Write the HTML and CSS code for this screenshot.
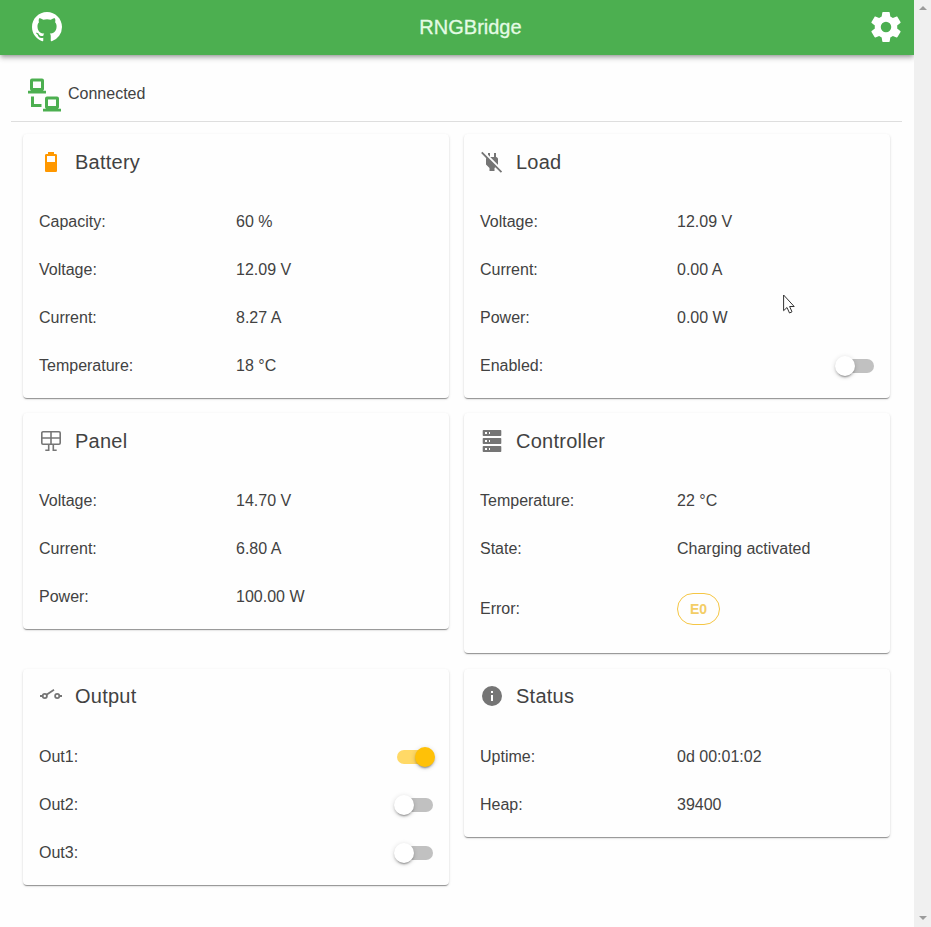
FILE: index.html
```html
<!DOCTYPE html>
<html lang="en">
<head>
<meta charset="utf-8">
<title>RNGBridge</title>
<link rel="stylesheet" href="styles.css">
</head>
<body>
<div class="app">
  <div class="page">
    <header class="bar">
      <svg class="bar-icon" viewBox="0 0 16 16"><path d="M8 0C3.58 0 0 3.58 0 8c0 3.54 2.29 6.53 5.47 7.59.4.07.55-.17.55-.38 0-.19-.01-.82-.01-1.49-2.01.37-2.53-.49-2.69-.94-.09-.23-.48-.94-.82-1.13-.28-.15-.68-.52-.01-.53.63-.01 1.08.58 1.23.82.72 1.21 1.87.87 2.33.66.07-.52.28-.87.51-1.07-1.78-.2-3.64-.89-3.64-3.95 0-.87.31-1.59.82-2.15-.08-.2-.36-1.02.08-2.12 0 0 .67-.21 2.2.82.64-.18 1.32-.27 2-.27s1.36.09 2 .27c1.53-1.04 2.2-.82 2.2-.82.44 1.1.16 1.92.08 2.12.51.56.82 1.27.82 2.15 0 3.07-1.87 3.75-3.65 3.95.29.25.54.73.54 1.48 0 1.07-.01 1.93-.01 2.2 0 .21.15.46.55.38A8.01 8.01 0 0 0 16 8c0-4.42-3.58-8-8-8z"/></svg>
      <h1 class="bar-title">RNGBridge</h1>
      <svg class="bar-icon gear" viewBox="2 2 20 20"><path d="M19.43 12.98c.04-.32.07-.64.07-.98s-.03-.66-.07-.98l2.11-1.65c.19-.15.24-.42.12-.64l-2-3.46c-.12-.22-.39-.3-.61-.22l-2.49 1c-.52-.4-1.08-.73-1.69-.98l-.38-2.65A.49.49 0 0 0 14 2h-4c-.25 0-.46.18-.49.42l-.38 2.65c-.61.25-1.17.59-1.69.98l-2.49-1c-.23-.09-.49 0-.61.22l-2 3.46c-.13.22-.07.49.12.64l2.11 1.65c-.04.32-.07.65-.07.98s.03.66.07.98l-2.11 1.65c-.19.15-.24.42-.12.64l2 3.46c.12.22.39.3.61.22l2.49-1c.52.4 1.08.73 1.69.98l.38 2.65c.03.24.24.42.49.42h4c.25 0 .46-.18.49-.42l.38-2.65c.61-.25 1.17-.59 1.69-.98l2.49 1c.23.09.49 0 .61-.22l2-3.46c.12-.22.07-.49-.12-.64l-2.11-1.65zM12 15.5a3.5 3.5 0 1 1 0-7 3.5 3.5 0 0 1 0 7z"/></svg>
    </header>
    <div class="connection">
      <svg class="connection-icon" viewBox="0 0 34 34"><path fill-rule="evenodd" d="M4 0.5H14a2 2 0 0 1 2 2V11a2 2 0 0 1-1 1.700H18V15.500H0V12.700H3A2 2 0 0 1 2 11V2.500A2 2 0 0 1 4 .5zM5 3.500V10H13V3.500zM3 18.500H6V26H13.500V29H3zM19 18.500H29a2 2 0 0 1 2 2V29a2 2 0 0 1-1 1.700H33V33.500H15V30.700H18A2 2 0 0 1 17 29V20.500A2 2 0 0 1 19 18.500zM20 21.500V28H28V21.500z"/></svg>
      <span>Connected</span>
    </div>
    <main class="cards">
      <section class="card">
        <h2 class="card-title"><svg class="battery" viewBox="0 0 24 24"><path fill-rule="evenodd" d="M16.700 4H15V2H9v2H7.300C6.600 4 6 4.600 6 5.300v15.400C6 21.400 6.600 22 7.300 22h9.400c.7 0 1.300-.6 1.300-1.300V5.300C18 4.600 17.400 4 16.700 4zM16 12H8V6h8z"/></svg>Battery</h2>
        <div class="row"><span>Capacity:</span><span>60 %</span></div>
        <div class="row"><span>Voltage:</span><span>12.09 V</span></div>
        <div class="row"><span>Current:</span><span>8.27 A</span></div>
        <div class="row"><span>Temperature:</span><span>18 °C</span></div>
      </section>
      <section class="card">
        <h2 class="card-title"><svg viewBox="0 0 24 24"><path d="M20.840 22.730 15.310 17.200 14.500 18V21H9.500V18L6 14.500V9C6 8.700 6.100 8.410 6.200 8.140L1.110 3.050 2.390 1.770 22.110 21.460zM18 14.500V9C18 8 17 7 16 7V3H14V7H10.200L17.850 14.650zM10 3H8V4.800L10 6.800z"/></svg>Load</h2>
        <div class="row"><span>Voltage:</span><span>12.09 V</span></div>
        <div class="row"><span>Current:</span><span>0.00 A</span></div>
        <div class="row"><span>Power:</span><span>0.00 W</span></div>
        <div class="row"><span>Enabled:</span><span class="switch"></span></div>
      </section>
      <section class="card">
        <h2 class="card-title"><svg class="outline" viewBox="0 0 24 24"><path d="M4 2.800H20a1.200 1.200 0 0 1 1.200 1.200V14a1.200 1.200 0 0 1-1.200 1.200H4A1.200 1.200 0 0 1 2.800 14V4A1.200 1.200 0 0 1 4 2.800zM2.800 9H21.200M12 2.800V15.200M9.700 15.200V21.200H6.300M14.300 15.200V21.200H17.700"/></svg>Panel</h2>
        <div class="row"><span>Voltage:</span><span>14.70 V</span></div>
        <div class="row"><span>Current:</span><span>6.80 A</span></div>
        <div class="row"><span>Power:</span><span>100.00 W</span></div>
      </section>
      <section class="card">
        <h2 class="card-title"><svg viewBox="0 0 24 24"><path fill-rule="evenodd" d="M3.500 1h17a.8.8 0 0 1 .8.8v4.400a.8.8 0 0 1-.8.8h-17a.8.8 0 0 1-.8-.8V1.800A.8.8 0 0 1 3.500 1zm0 8h17a.8.8 0 0 1 .8.800v4.400a.8.8 0 0 1-.8.800h-17a.8.8 0 0 1-.8-.8V9.800A.8.8 0 0 1 3.500 9zm0 8h17a.8.8 0 0 1 .8.800v4.400a.8.8 0 0 1-.8.800h-17a.8.8 0 0 1-.8-.8v-4.400a.8.8 0 0 1 .8-.8zM5 3v2h2V3zm4 0v2h1V3zM5 11v2h2v-2zm4 0v2h1v-2zM5 19v2h2v-2zm4 0v2h1v-2z"/></svg>Controller</h2>
        <div class="row"><span>Temperature:</span><span>22 °C</span></div>
        <div class="row"><span>State:</span><span>Charging activated</span></div>
        <div class="row tall"><span>Error:</span><span class="chip">E0</span></div>
      </section>
      <section class="card">
        <h2 class="card-title"><svg class="outline relay" viewBox="0 0 24 24"><circle cx="5.800" cy="12" r="2.100"/><circle cx="18.200" cy="12" r="2.100"/><path d="M1 12H3.700M20.300 12H23M7.500 10.700 15 5.800"/></svg>Output</h2>
        <div class="row"><span>Out1:</span><span class="switch on"></span></div>
        <div class="row"><span>Out2:</span><span class="switch"></span></div>
        <div class="row"><span>Out3:</span><span class="switch"></span></div>
      </section>
      <section class="card">
        <h2 class="card-title"><svg viewBox="0 0 24 24"><path d="M12 2a10 10 0 1 0 0 20 10 10 0 0 0 0-20zm1 15h-2v-6h2zm0-8h-2V7h2z"/></svg>Status</h2>
        <div class="row"><span>Uptime:</span><span>0d 00:01:02</span></div>
        <div class="row"><span>Heap:</span><span>39400</span></div>
      </section>
    </main>
  </div>
  <div class="scrollbar"><i class="arrow up"></i><i class="arrow down"></i></div>
</div>
<svg class="cursor" viewBox="0 0 12 20"><path d="M.6 1V16.700L4 13.500 6.500 19 9 17.800 6.600 12.500H11.200z"/></svg>
</body>
</html>
```
FILE: styles.css
```css
* { box-sizing: border-box; }
body {
  margin: 0;
  background: #fefefe;
  color: #424242;
  font: 16px/24px "Liberation Sans", Arial, sans-serif;
}
.app { display: flex; height: 927px; overflow: hidden; }
.page { flex: 1; overflow: hidden; }
.bar {
  display: flex;
  align-items: center;
  justify-content: space-between;
  height: 55px;
  padding: 0 13px 2px 32px;
  background: #4caf50;
  box-shadow: 0 2px 4px -1px rgba(0,0,0,.3), 0 4px 5px rgba(0,0,0,.12), 0 1px 8px rgba(0,0,0,.08);
}
.bar-icon { width: 30px; height: 30px; fill: #fff; }
.bar-title {
  margin: 0;
  color: #e4fbe4;
  font-size: 20px;
  font-weight: 400;
  -webkit-text-stroke: .3px #e4fbe4;
  transform: translateX(4px);
}
.connection {
  display: flex;
  align-items: center;
  gap: 6px;
  height: 67px;
  margin: 0 12px 0 11px;
  padding: 13px 0 0 17px;
  border-bottom: 1px solid #dedede;
}
.connection-icon { width: 34px; height: 34px; fill: #4caf50; }
.connection span { margin-bottom: 2px; }
.cards {
  display: grid;
  grid-template-columns: 426px 426px;
  gap: 15.4px 15px;
  align-items: start;
  padding: 12px 0 0 23px;
}
.card {
  padding-bottom: 8px;
  border-radius: 4px;
  background: #fefefe;
  box-shadow: 0 2px 1px -1px rgba(0,0,0,.26), 0 1px 1px rgba(0,0,0,.16), 0 1px 3px rgba(0,0,0,.12);
}
.card-title {
  display: flex;
  align-items: center;
  gap: 12px;
  height: 63px;
  margin: 0;
  padding: 0 16px 8px;
  font-size: 20px;
  font-weight: 400;
  letter-spacing: .25px;
}
.card-title svg { width: 24px; height: 24px; fill: #757575; }
.card-title .battery { fill: #ff9800; }
.card-title .outline { fill: none; stroke: #757575; stroke-width: 1.600; }
.card-title .relay { stroke-width: 1.800; }
.row {
  display: grid;
  grid-template-columns: 197px 1fr;
  align-items: center;
  height: 48px;
  padding: 2px 16px 0;
}
.row:last-child { margin-bottom: 1px; }
.tall { height: 72px; }
.switch {
  position: relative;
  justify-self: end;
  width: 36px;
  height: 14px;
  border-radius: 7px;
  background: #c1c1c1;
}
.switch::after {
  content: "";
  position: absolute;
  top: -3px;
  left: -3px;
  width: 20px;
  height: 20px;
  border-radius: 50%;
  background: #fff;
  box-shadow: 0 3px 1px -2px rgba(0,0,0,.2), 0 2px 2px rgba(0,0,0,.14), 0 1px 5px rgba(0,0,0,.16);
}
.switch.on { background: #ffd966; }
.switch.on::after { left: 18px; background: #ffc107; }
.chip {
  justify-self: start;
  width: 43px;
  height: 32px;
  border: 1px solid #f5c644;
  border-radius: 16px;
  color: #f3cd65;
  font-size: 14px;
  font-weight: 700;
  line-height: 31px;
  text-align: center;
}
.scrollbar {
  display: flex;
  flex-direction: column;
  align-items: center;
  justify-content: space-between;
  width: 17px;
  padding: 6px 0 7px;
  background: #f0f0f0;
}
.arrow { border: 4px solid transparent; }
.up { border-top: 0; border-bottom-color: #9b9b9b; }
.down { border-bottom: 0; border-top-color: #9b9b9b; }
.cursor {
  position: absolute;
  left: 783px;
  top: 294px;
  width: 12px;
  height: 20px;
  fill: #fff;
  stroke: #333;
  stroke-width: 1;
}
```
